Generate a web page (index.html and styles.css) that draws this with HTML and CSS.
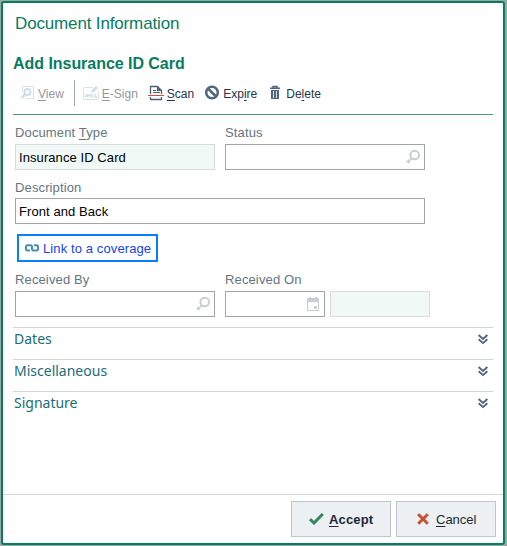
FILE: index.html
```html
<!DOCTYPE html>
<html lang="en">
<head>
<meta charset="utf-8">
<title>Document Information</title>
<link rel="stylesheet" href="styles.css">
</head>
<body>
<main class="dialog">
  <header class="title">Document Information</header>
  <section class="content">
    <h1>Add Insurance ID Card</h1>
    <nav class="toolbar">
      <button class="tool view off"><svg width="16" height="16" viewBox="0 0 16 16" fill="none"><path d="M2.5 7V1.5h11v12H6" stroke="#dfe2e5"/><circle cx="7.5" cy="7" r="3" stroke="#c9e0e9" stroke-width="2"/><path d="M5 9.5 1.5 13" stroke="#c9e0e9" stroke-width="2.5"/></svg><span><u>V</u>iew</span></button>
      <i class="split"></i>
      <button class="tool esign off"><svg width="17" height="16" viewBox="0 0 17 16" fill="none"><path d="M10 2.5H.5v12h15V7" stroke="#dfe2e5"/><path d="m8 8 1-3 4-4 2 2-4 4z" fill="#c9e0e9"/><path d="M2 12c3-4 3-2 2 0 3-3 4-3 3 0M9 12v-3m0 3h1m2-3v3h2" stroke="#c9e0e9" stroke-width="1.3"/></svg><span><u>E</u>-Sign</span></button>
      <button class="tool scan"><svg width="16" height="16" viewBox="0 0 16 16" fill="none"><path d="M2.5 9V1.5h7l4 4V9M2.5 12v2.5h11V12" stroke="#4b6075" stroke-width="1.3"/><path d="M9 1v5h5z" fill="#4b6075"/><path d="M5 5.5h3M5 7.5h7" stroke="#4b6075"/><path d="M0 10.5h16" stroke="#d0502f"/></svg><span><u>S</u>can</span></button>
      <button class="tool expire"><svg width="16" height="16" viewBox="0 0 16 16" fill="none" stroke="#50677e" stroke-width="2.5"><circle cx="8" cy="7.5" r="5.8"/><path d="m4 3.5 8 8"/></svg><span>Exp<u>i</u>re</span></button>
      <button class="tool delete"><svg width="12" height="16" viewBox="0 0 12 16"><path d="M1 3.2h10M4 3V1.5h4V3" stroke="#50677e" stroke-width="1.5" fill="none"/><path fill="#50677e" d="M2 5h8v9H2z"/><path d="M4.5 6v7m3-7v7" stroke="#fff" stroke-width=".8"/></svg><span>De<u>l</u>ete</span></button>
    </nav>
    <form class="fields">
      <div class="row">
        <div class="field"><label>Document <u>T</u>ype</label><div class="input readonly"><span>Insurance ID Card</span></div></div>
        <div class="field"><label>Status</label><div class="input"><svg class="glass" width="15" height="16" viewBox="0 0 15 16" fill="none" stroke="#c8ced4"><circle cx="8.7" cy="6" r="4.3" stroke-width="2"/><path d="m5.5 9.5-1.6 1.6" stroke-width="1.8"/><path d="m3.6 11.4-2.2 2.2" stroke-width="3"/></svg></div></div>
      </div>
      <div class="field wide"><label>Description</label><div class="input"><span>Front and Back</span></div></div>
      <a class="link"><svg width="14" height="8" viewBox="0 0 14 8" fill="none" stroke="#4a8eb1" stroke-width="2"><path d="M5 6.5H2.5Q1 6.5 1 5V3q0-1.7 1.5-1.7h3Q7.3 1.3 7.3 4.7M9 1.3h2.5Q13 1.3 13 3v2q0 1.5-1.5 1.5h-3Q6.7 6.5 6.7 3.3"/></svg><span>Link to a coverage</span></a>
      <div class="row received">
        <div class="field"><label>Received By</label><div class="input"><svg class="glass" width="15" height="16" viewBox="0 0 15 16" fill="none" stroke="#c8ced4"><circle cx="8.7" cy="6" r="4.3" stroke-width="2"/><path d="m5.5 9.5-1.6 1.6" stroke-width="1.8"/><path d="m3.6 11.4-2.2 2.2" stroke-width="3"/></svg></div></div>
        <div class="field"><label>Received On</label><div class="pair"><div class="input"><svg class="cal" width="12" height="14" viewBox="0 0 12 14" fill="#c8ced4"><path fill-rule="evenodd" d="M0 1h2V0h2v1h4V0h2v1h2v13H0zM1 5v8h10V5z"/><path d="M7 9h3v3H7z"/></svg></div><div class="input readonly"></div></div></div>
      </div>
    </form>
    <div class="section"><span>Dates</span><svg class="chev" width="10" height="11" viewBox="0 0 10 11" fill="none" stroke="#50677e" stroke-width="1.9"><path d="m.6 1 4.4 3.9L9.4 1M.6 5.2 5 9.1l4.4-3.9"/></svg></div>
    <div class="section"><span>Miscellaneous</span><svg class="chev" width="10" height="11" viewBox="0 0 10 11" fill="none" stroke="#50677e" stroke-width="1.9"><path d="m.6 1 4.4 3.9L9.4 1M.6 5.2 5 9.1l4.4-3.9"/></svg></div>
    <div class="section"><span>Signature</span><svg class="chev" width="10" height="11" viewBox="0 0 10 11" fill="none" stroke="#50677e" stroke-width="1.9"><path d="m.6 1 4.4 3.9L9.4 1M.6 5.2 5 9.1l4.4-3.9"/></svg></div>
  </section>
  <footer class="actions">
    <button class="action accept"><svg width="15" height="12" viewBox="0 0 15 12" fill="none" stroke="#38865f" stroke-width="3"><path d="m1 6.2 4 3.8L13.8 1"/></svg><span><u>A</u>ccept</span></button>
    <button class="action cancel"><svg width="12" height="12" viewBox="0 0 12 12" fill="none" stroke="#c94f35" stroke-width="3"><path d="m1.2 1.2 9.6 9.6m0-9.6-9.6 9.6"/></svg><span><u>C</u>ancel</span></button>
  </footer>
</main>
</body>
</html>
```
FILE: styles.css
```css
* { box-sizing: border-box; }
body {
  margin: 0;
  padding: 1px 2px 1px 1px;
  height: 546px;
  overflow: hidden;
  background: #a0a4a4;
  font: 13px/16px "Liberation Sans", Arial, sans-serif;
}
svg { display: block; flex: none; }
span { white-space: nowrap; }
u { text-decoration-thickness: 1px; text-underline-offset: 2px; text-decoration-skip-ink: none; }
.dialog {
  display: flex;
  flex-direction: column;
  width: 504px;
  height: 544px;
  border: 2px solid #008060;
  border-radius: 3px;
  background: #fff;
}
.title {
  height: 40px;
  padding: 11px 12px 0;
  font-size: 17px;
  line-height: 20px;
  letter-spacing: -.15px;
  color: #087b63;
}
.content { flex: 1; padding: 0 10px; }
h1 {
  margin: 0;
  height: 34px;
  padding-top: 11px;
  font-size: 16px;
  line-height: 20px;
  letter-spacing: -.04px;
  color: #087b63;
}
.toolbar {
  display: flex;
  height: 38px;
  border-bottom: 1px solid #509b80;
  font-size: 12px;
}
.tool {
  display: flex;
  align-items: center;
  gap: 3px;
  height: 32px;
  padding: 0;
  border: 0;
  background: none;
  font: inherit;
  color: #243648;
}
.tool span { padding-top: 2px; }
.off { color: #92979d; }
.view { padding-left: 7px; gap: 2px; }
.split { width: 1px; height: 26px; margin: 3px 8px 0 10px; background: #a0a4a8; }
.esign { gap: 2px; }
.scan { margin-left: 10px; }
.expire { margin-left: 10px; }
.delete { margin-left: 12px; gap: 5px; }
.fields { padding: 10px 0 0 2px; }
.row { display: flex; gap: 10px; }
.field { width: 200px; }
label { display: block; height: 19px; line-height: 16px; letter-spacing: .13px; color: #647482; }
.input {
  display: flex;
  align-items: center;
  height: 26px;
  padding: 0 3px;
  border: 1px solid #a2a4a6;
  color: #000;
  letter-spacing: .08px;
}
.input span { padding-top: 1px; }
.readonly { border-color: #d8dbda; background: #f0f9f6; }
.glass { margin-left: auto; }
.wide { width: 410px; margin-top: 9px; }
.wide label { padding-top: 1px; }
.link {
  display: flex;
  align-items: center;
  gap: 4px;
  width: 141px;
  height: 28px;
  margin: 10px 0 10px 2px;
  padding-left: 6px;
  border: 2px solid #087dff;
  letter-spacing: .11px;
  color: #1544ef;
}
.link span { padding-top: 2px; }
.pair { display: grid; grid-template-columns: 100px 100px; gap: 5px; width: 205px; }
.cal { margin-left: auto; margin-right: 2px; }
.received { padding-bottom: 10px; }
.section {
  display: flex;
  justify-content: space-between;
  height: 32px;
  padding: 1px 5px 0 1px;
  border-top: 1px solid #d0d6d3;
  font: 14px/19px "Noto Sans", sans-serif;
  color: #206c78;
}
.chev { margin-top: 5px; }
.actions {
  display: flex;
  justify-content: flex-end;
  gap: 5px;
  height: 49px;
  padding: 6px 7px 0 0;
  border-top: 1px solid #d5d8d9;
}
.action {
  display: flex;
  align-items: center;
  width: 100px;
  height: 36px;
  padding: 0 0 0 17px;
  border: 1px solid #bdc6cc;
  background: #ecf0f3;
  font: inherit;
  color: #202833;
  gap: 5px;
}
.action span { padding-top: 2px; }
.accept { font-weight: bold; letter-spacing: .15px; }
.cancel { padding-left: 20px; gap: 7px; }
```
